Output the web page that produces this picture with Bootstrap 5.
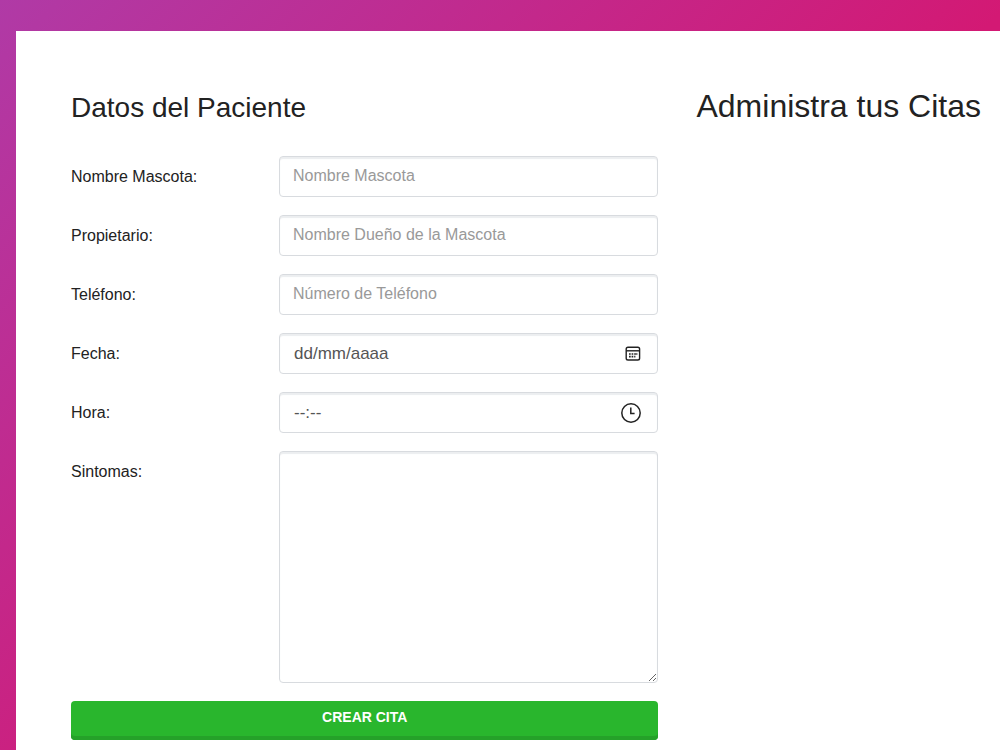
<!DOCTYPE html>
<html lang="es">
<head>
<meta charset="utf-8">
<meta name="viewport" content="width=device-width, initial-scale=1">
<title>Administrador de Citas</title>
<link href="https://cdn.jsdelivr.net/npm/bootstrap@5.3.0/dist/css/bootstrap.min.css" rel="stylesheet">
<style>
  body {
    font-family: "Liberation Sans", Arial, sans-serif;
    color: #222;
    background: linear-gradient(135deg, #b03aa6 0%, #d31974 58%, #d31974 100%);
    background-attachment: fixed;
  }
  .page-frame { padding: 31px 0 0 16px; }
  .page-panel { padding: 59px 19px 9px 55px; gap: 38px; }
  .form-title { font-size: 28px; line-height: 36px; margin: 0 0 30px; }
  .list-title { font-size: 32px; line-height: 32px; }
  .field { display: grid; grid-template-columns: 208px 1fr; margin-bottom: 18px; }
  .field label { line-height: 24px; padding-top: 9px; }
  .field .form-control {
    height: 41px;
    padding: 0 13px 1px;
    color: #555;
    border: 1px solid #d8dbdf;
    border-radius: 4px;
    box-shadow: inset 0 2px 1px #eceef0;
  }
  .field .form-control::placeholder { color: #999; }
  .field .picker::placeholder { color: #555; }
  .field .picker { padding: 1px 14px 0; font-size: 17px; }
  .field textarea.form-control { height: 232px; padding: 8px 14px; resize: both; }
  .picker-btn {
    right: 14px; top: 0; height: 41px; width: 22px;
    display: flex; align-items: center; justify-content: center;
  }
  .picker-btn.time-btn { right: 16px; }
  .btn-create {
    height: 39px;
    padding: 0 0 6px;
    color: #fff;
    background: #29b62d;
    border: 0;
    border-radius: 4px;
    box-shadow: inset 0 -4px 0 #25a129;
    font-size: 14px;
    font-weight: 700;
    text-transform: uppercase;
  }
  .btn-create:hover { color: #fff; background: #25a129; }
</style>
</head>
<body>
<div class="page-frame min-vh-100 d-flex">
  <main class="page-panel bg-white flex-grow-1 d-flex align-items-start">
    <section class="flex-fill">
      <h2 class="form-title fw-normal">Datos del Paciente</h2>
      <form>
        <div class="field">
          <label for="mascota">Nombre Mascota:</label>
          <input type="text" class="form-control" id="mascota" placeholder="Nombre Mascota">
        </div>
        <div class="field">
          <label for="propietario">Propietario:</label>
          <input type="text" class="form-control" id="propietario" placeholder="Nombre Dueño de la Mascota">
        </div>
        <div class="field">
          <label for="telefono">Teléfono:</label>
          <input type="tel" class="form-control" id="telefono" placeholder="Número de Teléfono">
        </div>
        <div class="field">
          <label for="fecha">Fecha:</label>
          <div class="position-relative">
            <input type="text" class="form-control picker" id="fecha" placeholder="dd/mm/aaaa">
            <button type="button" class="picker-btn position-absolute border-0 bg-transparent p-0" aria-label="Elegir fecha">
              <svg width="18" height="18" viewBox="0 0 18 18" fill="none" stroke="#222" stroke-width="1.4">
                <rect x="2.2" y="2.2" width="13.4" height="12.8" rx="1.8"/>
                <path d="M2.2 5.8h13.4"/>
                <path d="M7.6 9h1.7M10.2 9h1.7M12.2 9h1.2M5 11.6h1.7M7.6 11.6h1.7M10.2 11.6h1.2M5 9h1.7" stroke-width="1.6"/>
              </svg>
            </button>
          </div>
        </div>
        <div class="field">
          <label for="hora">Hora:</label>
          <div class="position-relative">
            <input type="text" class="form-control picker" id="hora" placeholder="--:--">
            <button type="button" class="picker-btn time-btn position-absolute border-0 bg-transparent p-0" aria-label="Elegir hora">
              <svg width="22" height="22" viewBox="0 0 22 22" fill="none" stroke="#222" stroke-width="1.5">
                <circle cx="11" cy="11" r="9.2"/>
                <path d="M10.8 5.4v6h3.8"/>
              </svg>
            </button>
          </div>
        </div>
        <div class="field">
          <label for="sintomas">Sintomas:</label>
          <textarea class="form-control" id="sintomas"></textarea>
        </div>
        <button type="submit" class="btn btn-create w-100 d-block">Crear Cita</button>
      </form>
    </section>
    <section class="flex-shrink-0">
      <h2 class="list-title fw-normal m-0">Administra tus Citas</h2>
    </section>
  </main>
</div>
<script src="https://cdn.jsdelivr.net/npm/bootstrap@5.3.0/dist/js/bootstrap.bundle.min.js"></script>
</body>
</html>
